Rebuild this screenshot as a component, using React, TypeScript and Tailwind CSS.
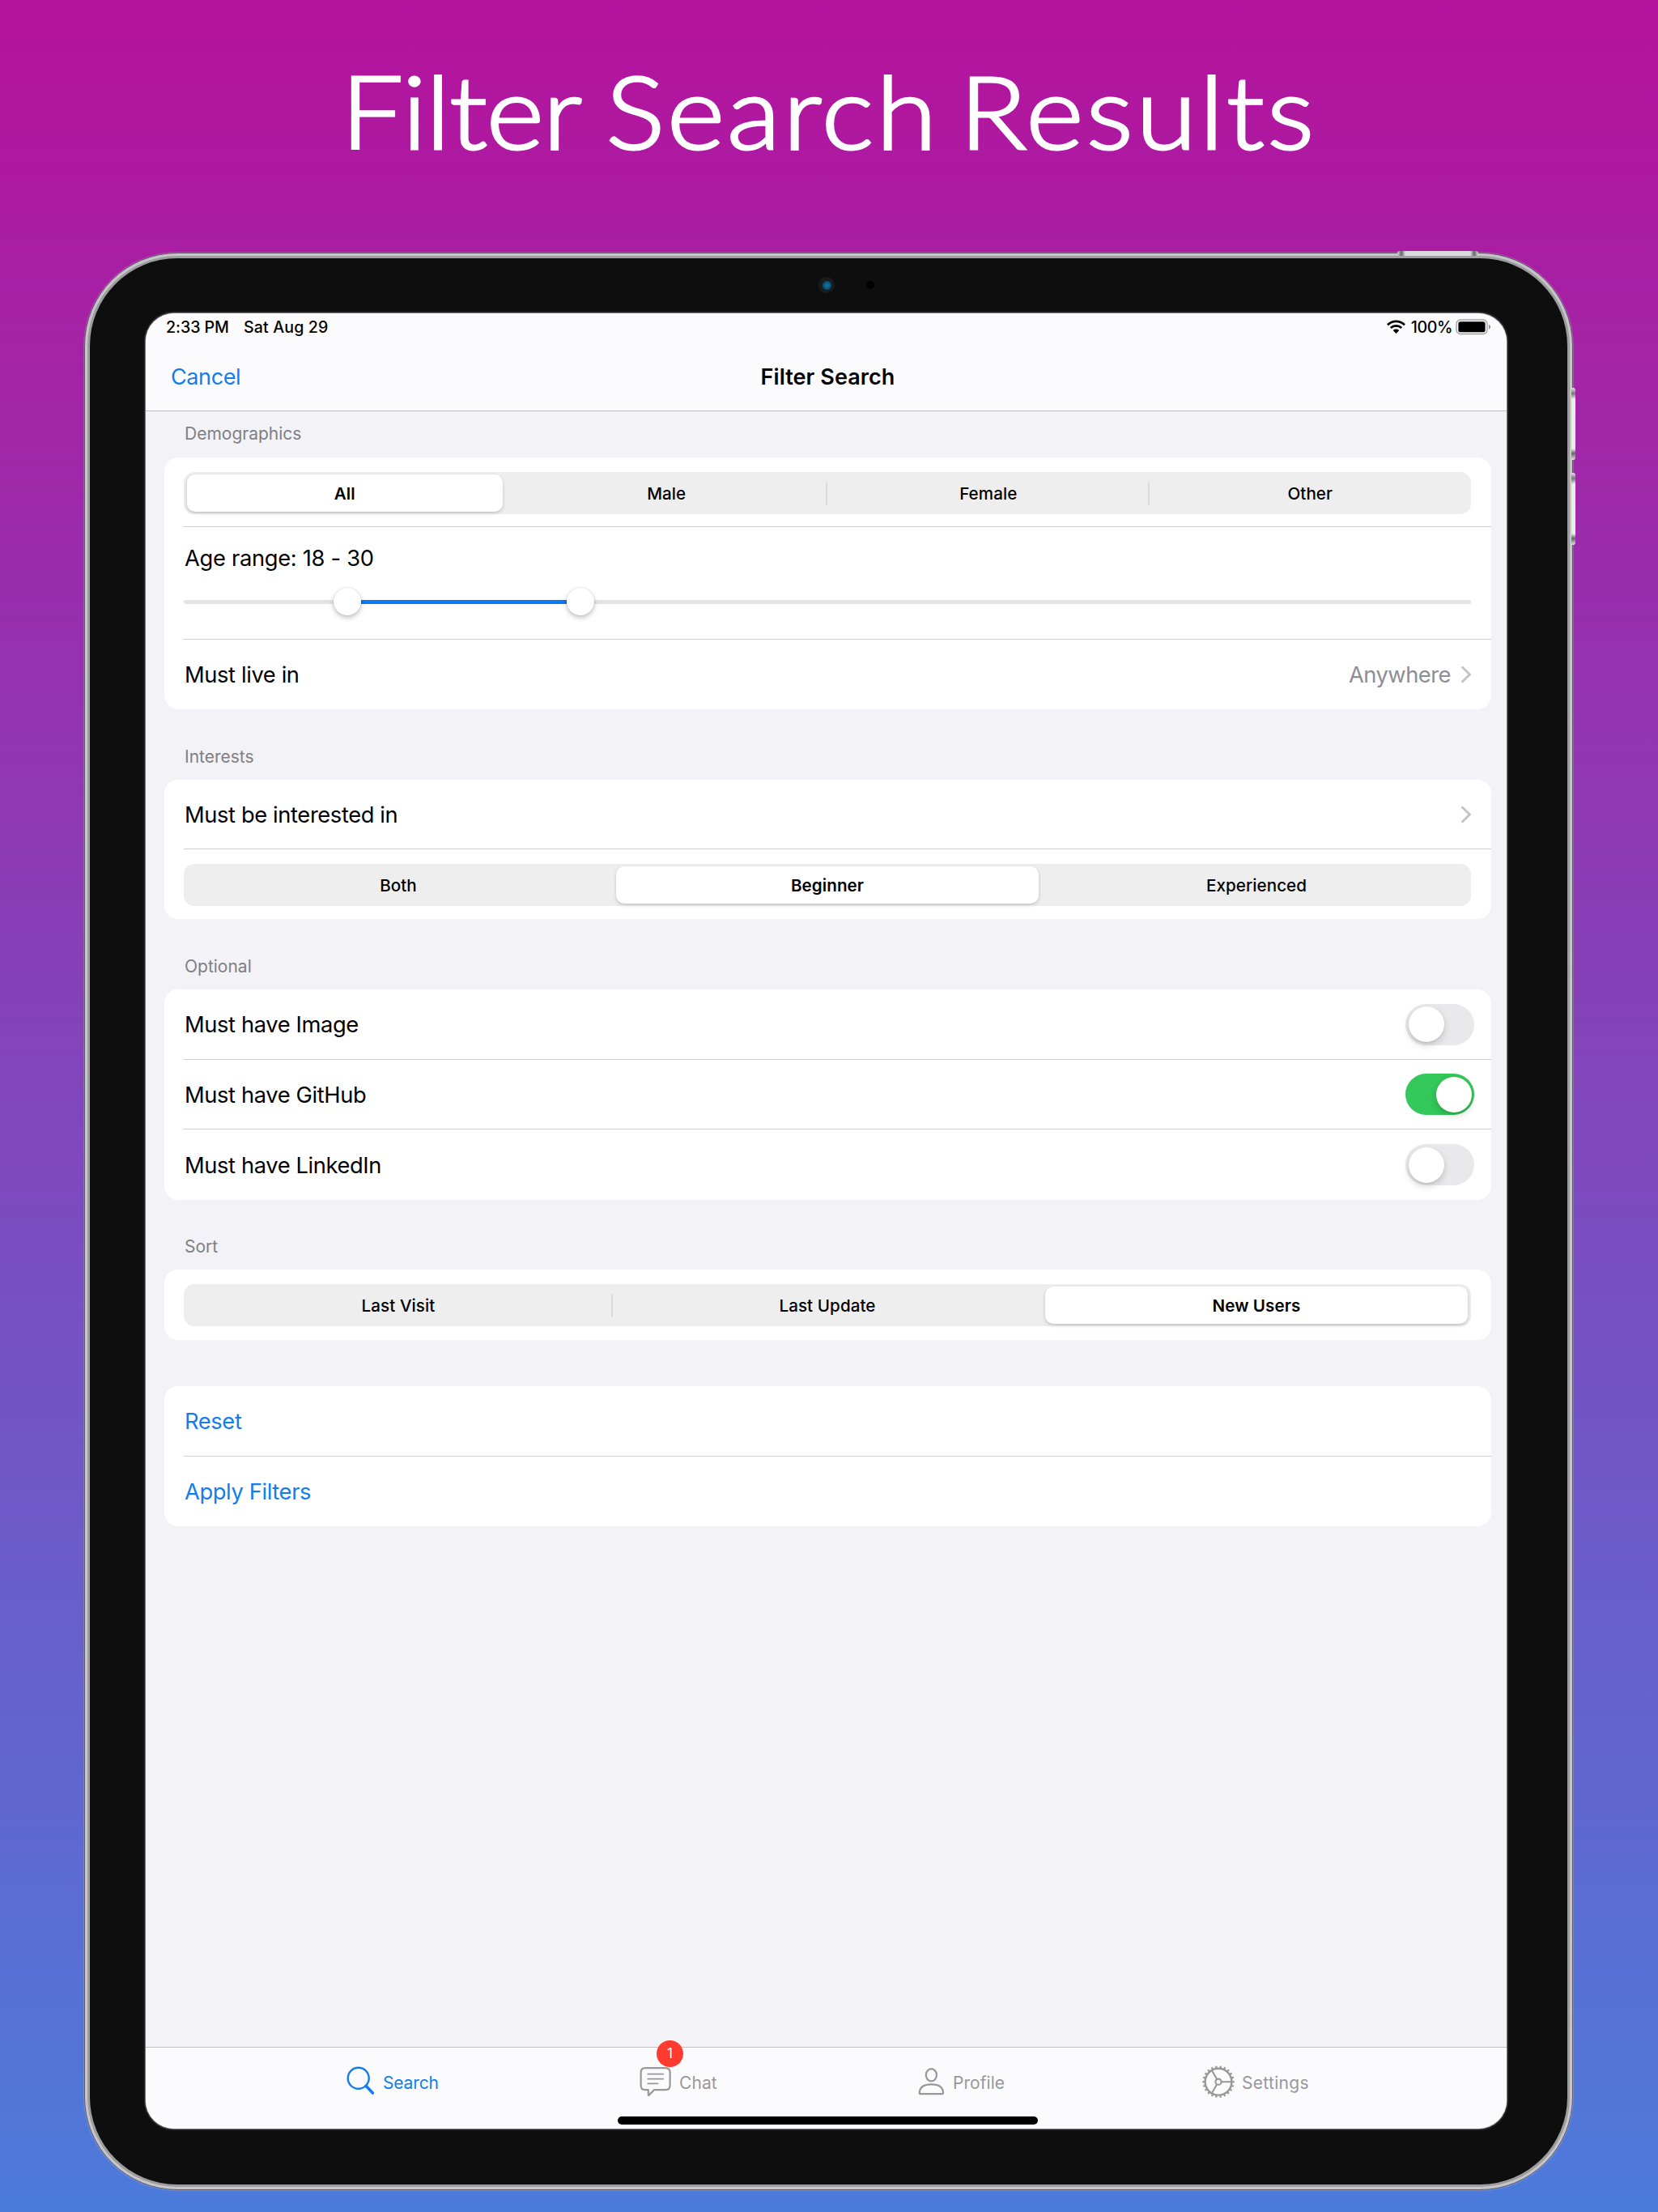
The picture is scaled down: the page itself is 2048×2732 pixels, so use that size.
import type { ReactNode } from 'react';

const TEETH = Array.from({ length: 22 }, (_, i) => (i * 360) / 22);

function Segmented({ options, selected }: { options: string[]; selected: number }) {
  return (
    <div className="flex h-[52px] w-[1590px] rounded-[13px] bg-[#eeeeef]">
      {options.map((label, i) => (
        <div key={label} className="relative flex flex-1 px-1 py-[3px]">
          {i > 0 && i !== selected && i - 1 !== selected && (
            <span className="absolute -left-0.5 top-3 h-[29px] w-0.5 rounded-full bg-[#dadadc]" />
          )}
          <div
            className={
              i === selected
                ? 'flex flex-1 items-center justify-center rounded-[10px] bg-white pt-0.5 text-[20.6px] font-semibold tracking-[0.08px] shadow-[0_2px_5px_rgba(0,0,0,0.14),0_1px_2px_rgba(0,0,0,0.08)]'
                : 'flex flex-1 items-center justify-center pt-0.5 text-[20.6px] font-medium tracking-[0.08px]'
            }
          >
            {label}
          </div>
        </div>
      ))}
    </div>
  );
}

function SegmentRow({ height, options, selected }: { height: string; options: string[]; selected: number }) {
  return (
    <div className={`${height} pl-6 pt-[18px]`}>
      <Segmented options={options} selected={selected} />
    </div>
  );
}

function Label({ height, children }: { height: string; children?: ReactNode }) {
  return (
    <div className={`${height} flex items-end pl-[25px] text-[21px] leading-7 text-[#7f7f84]`}>{children}</div>
  );
}

function Card({ children }: { children: ReactNode }) {
  return <div className="overflow-hidden rounded-[17px] bg-white">{children}</div>;
}

function Divider() {
  return <div className="ml-6 h-px bg-[#cdcdd0]" />;
}

function Row({ height, label, blue, children }: { height: string; label: string; blue?: boolean; children?: ReactNode }) {
  return (
    <div className={`${height} flex items-center justify-between pl-[25px] text-[27.3px] tracking-[-0.38px]`}>
      <span className={blue ? 'pt-[3px] text-[#127eec]' : 'pt-[3px] text-black'}>{label}</span>
      {children}
    </div>
  );
}

function Chevron() {
  return (
    <svg className="h-[22px] w-[14px]" viewBox="0 0 14 22" fill="none">
      <path d="M2.5 2.2 L11.5 11 L2.5 19.8" stroke="#c3c3c6" strokeWidth="2.9" strokeLinecap="round" strokeLinejoin="round" />
    </svg>
  );
}

function Toggle({ on }: { on?: boolean }) {
  return (
    <div className={on ? 'mr-[21px] flex h-[51px] w-[85px] justify-end rounded-full bg-[#34c759] p-[3.5px]' : 'mr-[21px] flex h-[51px] w-[85px] rounded-full bg-[#e9e9eb] p-[3.5px]'}>
      <div className="size-11 rounded-full bg-white shadow-[0_4px_10px_rgba(0,0,0,0.16),0_1px_2px_rgba(0,0,0,0.1)]" />
    </div>
  );
}

function StatusBar() {
  return (
    <div className="flex h-[34px] items-center justify-between pl-[25px] pr-[19px] text-[19.6px] font-medium">
      <div className="flex gap-[18px] pt-0.5">
        <span className="tracking-[-0.05px]">2:33 PM</span>
        <span className="tracking-[0.15px]">Sat Aug 29</span>
      </div>
      <div className="flex items-center">
        <svg className="mr-[7px] h-[17px] w-[23px]" viewBox="0 0 23 17" fill="none" stroke="#000" strokeWidth="2.7">
          <path d="M1 6.2 A15 15 0 0 1 22 6.2" />
          <path d="M4.8 10 A9.6 9.6 0 0 1 18.2 10" />
          <path d="M11.5 17 L7.7 12.9 A5.6 5.6 0 0 1 15.3 12.9 Z" fill="#000" stroke="none" />
        </svg>
        <span className="mr-1 pt-0.5 tracking-[-0.4px]">100%</span>
        <svg className="h-5 w-11" viewBox="0 0 44 20">
          <rect x="1" y="1" width="38" height="17.5" rx="5" fill="none" stroke="#a2a2a4" strokeWidth="1.4" />
          <rect x="3.4" y="3.3" width="33.2" height="13" rx="2.6" fill="#000" />
          <path d="M41 6.8 C43.6 7.8 43.6 11.8 41 12.8 Z" fill="#8e8e90" />
        </svg>
      </div>
    </div>
  );
}

function TabBar() {
  return (
    <div className="flex h-[101px] shrink-0 flex-col border-t border-[#c1c1c4] bg-[#fbfbfd]">
      <div className="flex h-[85px] pt-[21px] text-[21px] leading-[42px] text-[#98989b]">
        <div className="ml-[247px] flex w-[361px] text-[#127eec]">
          <svg className="mr-[9px] h-[40px] w-[37px]" viewBox="0 0 37 40" fill="none" stroke="currentColor" strokeLinecap="round">
            <circle cx="15.7" cy="16.8" r="13" strokeWidth="2.4" />
            <path d="M25 26.3 L33.4 35" strokeWidth="3.6" />
          </svg>
          <span className="pt-0.5 tracking-[-0.15px]">Search</span>
        </div>
        <div className="relative flex w-[344px]">
          <svg className="mr-[9px] h-[42px] w-[42px]" viewBox="0 0 42 42" fill="none" stroke="currentColor" strokeWidth="2.2" strokeLinecap="round" strokeLinejoin="round">
            <path d="M9 4.2 H34 Q39.6 4.2 39.6 9.8 V25.6 Q39.6 31.2 34 31.2 H20 L13.6 37.6 Q12.8 38.4 12.8 37 V31.2 H9 Q3.6 31.2 3.6 25.6 V9.8 Q3.6 4.2 9 4.2 Z" />
            <path d="M12.3 11.6 H31.2 M12.3 17.6 H31.2 M12.3 23.4 H24.4" strokeWidth="1.9" />
          </svg>
          <span className="pt-0.5 tracking-[0.1px]">Chat</span>
          <span className="absolute left-[23px] top-[-30px] flex size-[33px] items-center justify-center rounded-full bg-[#ff3b30] text-[17px] leading-none text-white">1</span>
        </div>
        <div className="flex w-[349px]">
          <svg className="mr-[9px] h-[42px] w-[36px]" viewBox="0 0 36 42" fill="none" stroke="currentColor" strokeWidth="2.2" strokeLinejoin="round">
            <ellipse cx="18.4" cy="12.8" rx="6.6" ry="7.6" />
            <path d="M4.8 36.2 Q3.7 36.2 3.8 34.4 C4.2 28 9.6 24.4 18.4 24.4 C27.2 24.4 32.6 28 33 34.4 Q33.1 36.2 32 36.2 Z" />
          </svg>
          <span className="pt-0.5 tracking-[0.05px]">Profile</span>
        </div>
        <div className="flex">
          <svg className="mr-[9px] h-[42px] w-[44px]" viewBox="0 0 44 42" fill="none" stroke="currentColor" strokeWidth="2.1">
            <circle cx="24" cy="21.2" r="16.4" strokeWidth="2.4" />
            <circle cx="24" cy="21.2" r="3.6" />
            <path d="M27.6 21.2 H40.6 M22.2 18.1 L15.7 6.8 M22.2 24.3 L15.7 35.6" />
            {TEETH.map((angle) => (
              <path key={angle} d="M41 21.2 H43.7" transform={`rotate(${angle} 24 21.2)`} strokeWidth="2.2" />
            ))}
          </svg>
          <span className="pt-0.5 tracking-[0.3px]">Settings</span>
        </div>
      </div>
      <div className="ml-[583px] h-[10px] w-[519px] rounded-full bg-black" />
    </div>
  );
}

function HardwareButtons() {
  return (
    <>
      <span className="absolute left-[1621px] top-[-3px] h-[6px] w-[100px] rounded-t-[3px] bg-[linear-gradient(90deg,#d8d8d8_0,#666_5px,#dcdcde_10px,#dcdcde_90px,#666_95px,#d8d8d8_100px)]" />
      <span className="absolute left-[1836px] top-[166px] h-[89px] w-[5px] rounded-r-[3px] bg-[linear-gradient(180deg,#e4e4e4_0,#777_7px,#ececee_14px,#ececee_75px,#666_81px,#e4e4e4_89px)]" />
      <span className="absolute left-[1836px] top-[271px] h-[89px] w-[5px] rounded-r-[3px] bg-[linear-gradient(180deg,#e4e4e4_0,#777_7px,#ececee_14px,#ececee_75px,#666_81px,#e4e4e4_89px)]" />
    </>
  );
}

export default function App() {
  return (
    <div className="flex h-[2732px] w-[2048px] flex-col overflow-hidden bg-[linear-gradient(180deg,#b5129c_0%,#4c7bdb_100%)] font-['Inter',sans-serif] text-black">
      <h1 className="flex h-[312px] shrink-0 scale-x-[1.09] justify-center whitespace-nowrap pt-[58px] font-['Lato',sans-serif] text-[125px] font-light leading-[156px] text-white [-webkit-text-stroke:3px_white]">
        <span className="mr-[28px] tracking-[-0.9px]">Filter</span>
        <span className="mr-[23px] tracking-[2.9px]">Search</span>
        <span className="tracking-[3.2px]">Results</span>
      </h1>
      <div className="relative ml-[104px] h-[2393px] w-[1839px] shrink-0 rounded-[115px] border border-[#5f5a68] bg-[#c6c6c9] p-[3px] shadow-[0_0_0_1px_rgba(255,255,255,0.16)]">
        <HardwareButtons />
        <div className="relative h-full rounded-[111px] bg-[#9d9d9f] p-[3px]">
          <div className="flex h-full flex-col rounded-[108px] bg-[#0e0e0e] pl-[69px] pt-[68px]">
            <span className="absolute left-[903px] top-[26px] flex size-5 items-center justify-center rounded-full bg-[#1b1c1d]">
              <span className="size-[11px] rounded-full bg-[radial-gradient(circle,#1279a0_0%,#0b5478_55%,#0d3550_100%)]" />
            </span>
            <span className="absolute left-[962px] top-[31px] size-[10px] rounded-full bg-black" />
            <div className="flex h-[2242px] w-[1681px] flex-col overflow-hidden rounded-[35px] bg-[#f2f2f7] shadow-[0_0_0_1px_#77777a,0_0_0_2.5px_#232324]">
              <div className="h-[121px] shrink-0 border-b border-[#bcbcbf] bg-[#fbfbfd]">
                <StatusBar />
                <div className="grid h-[88px] grid-cols-3 items-center pl-[32px] pr-[28px] pt-[3px] text-[27px]">
                  <span className="-ml-px tracking-[-0.4px] text-[#127eec]">Cancel</span>
                  <span className="text-center font-semibold tracking-[0.08px]">Filter Search</span>
                </div>
              </div>
              <div className="flex flex-1 flex-col pl-[23px] pr-[19px]">
                <Label height="h-[57px] pb-[15px]">Demographics</Label>
                <Card>
                  <SegmentRow height="h-[85px]" options={['All', 'Male', 'Female', 'Other']} selected={0} />
                  <Divider />
                  <div className="h-[138px] pl-6 pt-[23px]">
                    <div className="pl-px text-[27.3px] leading-[32px] tracking-[-0.3px]">Age range: 18 - 30</div>
                    <div className="mt-[20px] flex h-[34px] w-[1590px] items-center">
                      <div className="h-[5px] w-[185px] rounded-l-full bg-[#e3e3e4]" />
                      <div className="z-10 size-[34px] rounded-full bg-white shadow-[0_3px_6px_rgba(0,0,0,0.24),0_0_2px_rgba(0,0,0,0.14)]" />
                      <div className="h-[5px] w-[254px] bg-[#0a7af5]" />
                      <div className="z-10 size-[34px] rounded-full bg-white shadow-[0_3px_6px_rgba(0,0,0,0.24),0_0_2px_rgba(0,0,0,0.14)]" />
                      <div className="h-[5px] flex-1 rounded-r-full bg-[#e3e3e4]" />
                    </div>
                  </div>
                  <Divider />
                  <Row height="h-[86px]" label="Must live in">
                    <span className="mr-6 flex items-center gap-3 text-[#8e8e92]">
                      <span className="pt-[3px] tracking-[-0.5px]">Anywhere</span>
                      <Chevron />
                    </span>
                  </Row>
                </Card>
                <Label height="h-[87px] pb-[14px]">Interests</Label>
                <Card>
                  <Row height="h-[85px]" label="Must be interested in">
                    <span className="mr-6">
                      <Chevron />
                    </span>
                  </Row>
                  <Divider />
                  <SegmentRow height="h-[86px]" options={['Both', 'Beginner', 'Experienced']} selected={1} />
                </Card>
                <Label height="h-[87px] pb-[14px]">Optional</Label>
                <Card>
                  <Row height="h-[86px]" label="Must have Image">
                    <Toggle />
                  </Row>
                  <Divider />
                  <Row height="h-[85px]" label="Must have GitHub">
                    <Toggle on />
                  </Row>
                  <Divider />
                  <Row height="h-[87px]" label="Must have LinkedIn">
                    <Toggle />
                  </Row>
                </Card>
                <Label height="h-[86px] pb-[14px]">Sort</Label>
                <Card>
                  <SegmentRow height="h-[87px]" options={['Last Visit', 'Last Update', 'New Users']} selected={2} />
                </Card>
                <Label height="h-[57px]" />
                <Card>
                  <Row height="h-[86px]" label="Reset" blue />
                  <Divider />
                  <Row height="h-[86px]" label="Apply Filters" blue />
                </Card>
              </div>
              <TabBar />
            </div>
          </div>
        </div>
      </div>
    </div>
  );
}
